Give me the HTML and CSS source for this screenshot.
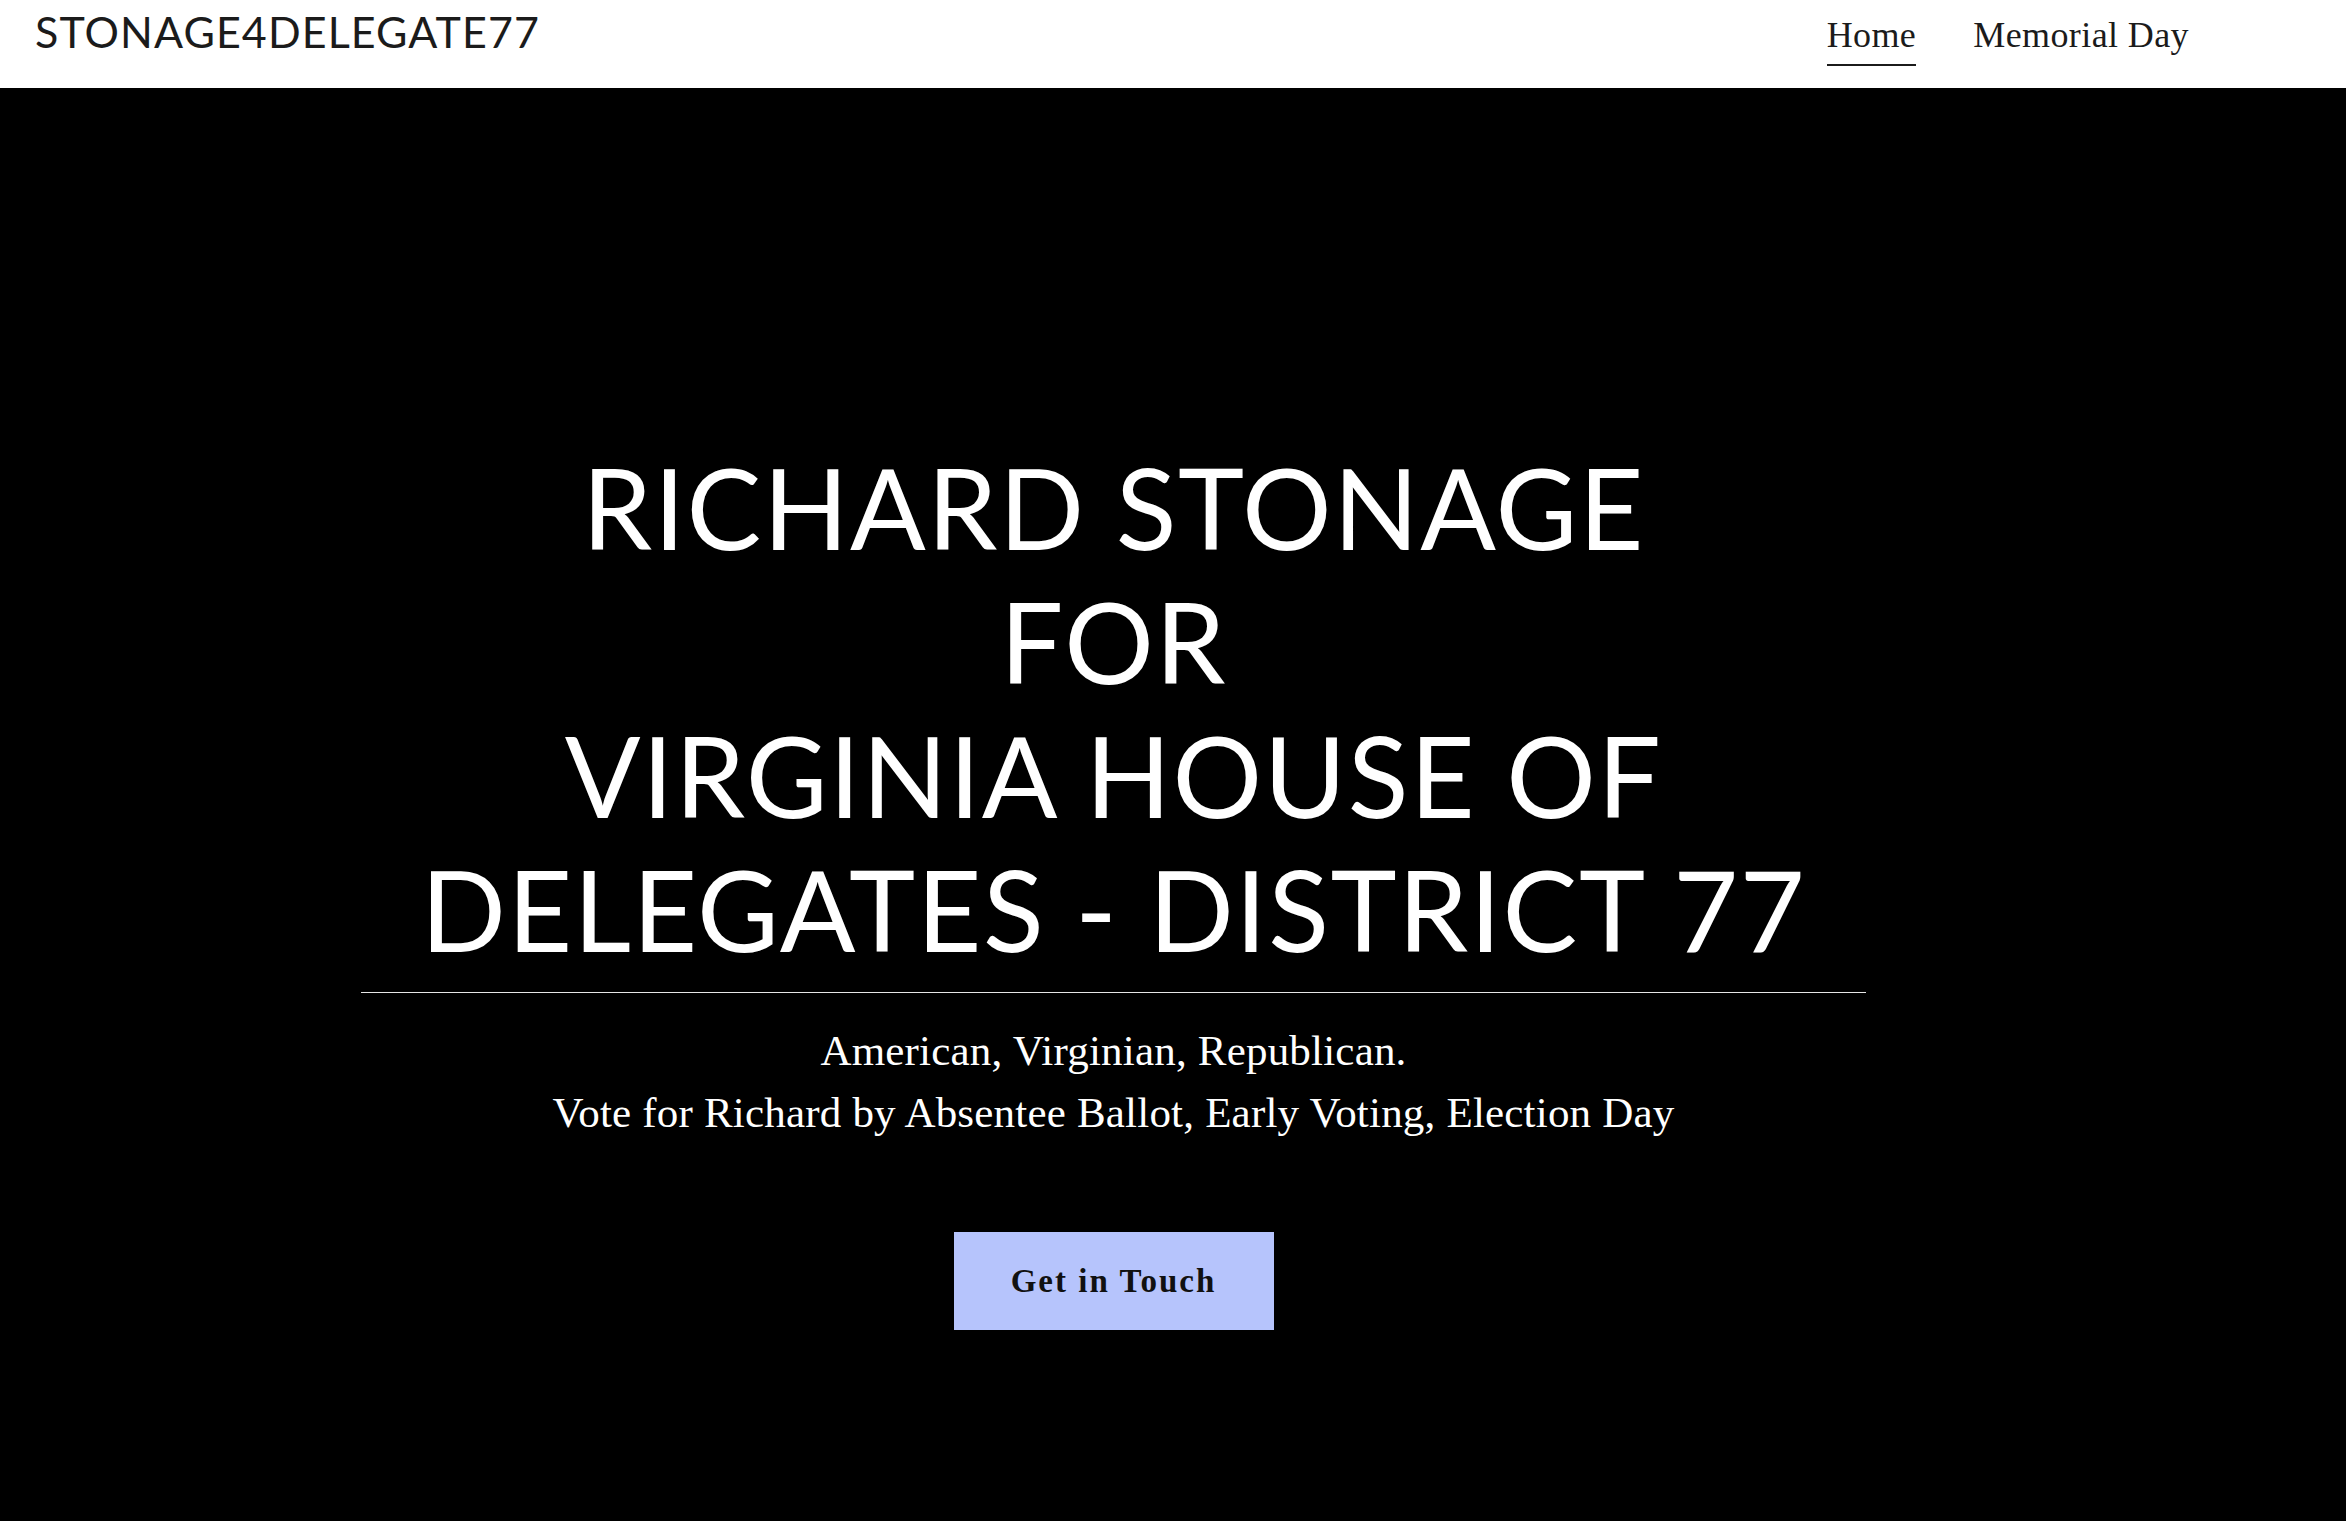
FILE: index.html
```html
<!DOCTYPE html>
<html lang="en">
<head>
<meta charset="utf-8">
<title>STONAGE4DELEGATE77</title>
<link rel="stylesheet" href="styles.css">
</head>
<body>
<header class="site-header">
  <div class="logo">STONAGE4DELEGATE77</div>
  <nav class="nav">
    <a class="nav-link active" href="#">Home</a>
    <a class="nav-link" href="#">Memorial Day</a>
  </nav>
</header>
<main class="hero">
  <div class="hero-inner">
    <h1 class="hero-title">RICHARD STONAGE<br>FOR<br>VIRGINIA HOUSE OF<br>DELEGATES - DISTRICT 77</h1>
    <hr class="hero-rule">
    <p class="hero-sub">American, Virginian, Republican.<br>Vote for Richard by Absentee Ballot, Early Voting, Election Day</p>
    <a class="cta" href="#">Get in Touch</a>
  </div>
</main>
</body>
</html>
```

FILE: styles.css
```css
* { box-sizing: border-box; }
html, body { margin: 0; padding: 0; }
body {
  width: 2346px;
  height: 1521px;
  overflow: hidden;
  background: #000;
  font-family: "Liberation Serif", serif;
}
.site-header {
  height: 88px;
  background: #fff;
  display: flex;
  align-items: flex-start;
  justify-content: space-between;
  padding: 0 157px 0 35px;
}
.logo {
  font-family: Lato, "Liberation Sans", sans-serif;
  font-size: 43px;
  letter-spacing: 1.1px;
  line-height: 52px;
  color: #1b1b1b;
  margin-top: 6px;
}
.nav {
  display: flex;
  gap: 57px;
  padding-top: 15px;
}
.nav-link {
  font-family: "Liberation Serif", serif;
  font-size: 36px;
  letter-spacing: 0.4px;
  line-height: 40px;
  color: #1b1b1b;
  text-decoration: none;
  padding-bottom: 9px;
  border-bottom: 2px solid transparent;
}
.nav-link.active { border-bottom-color: #1b1b1b; }
.hero {
  background: #000;
  height: 1433px;
  padding-top: 352px;
}
.hero-inner {
  width: 1505px;
  margin-left: 361px;
  display: flex;
  flex-direction: column;
  align-items: center;
  text-align: center;
}
.hero-title {
  margin: 0;
  font-family: Lato, "Liberation Sans", sans-serif;
  font-weight: 400;
  font-size: 112px;
  letter-spacing: 1.5px;
  line-height: 134px;
  color: #fff;
}
.hero-rule {
  width: 100%;
  margin: 16px 0 0;
  border: 0;
  border-top: 1px solid #e6e6e6;
  height: 0;
}
.hero-sub {
  margin: 27px 0 0;
  font-family: "Liberation Serif", serif;
  font-size: 43px;
  letter-spacing: 0.2px;
  line-height: 62px;
  color: #fff;
}
.cta {
  margin-top: 88px;
  width: 320px;
  height: 98px;
  display: flex;
  align-items: center;
  justify-content: center;
  background: #b6c4fc;
  color: #111;
  font-family: "Liberation Serif", serif;
  font-weight: 700;
  font-size: 33px;
  letter-spacing: 2px;
  text-decoration: none;
}
```
